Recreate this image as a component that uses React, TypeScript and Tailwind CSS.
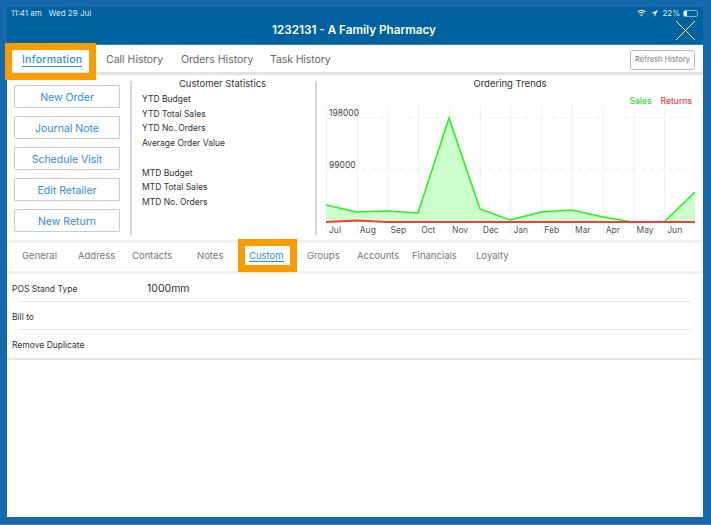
const actions = ['New Order', 'Journal Note', 'Schedule Visit', 'Edit Retailer', 'New Return']
const ytd = ['YTD Budget', 'YTD Total Sales', 'YTD No. Orders', 'Average Order Value']
const mtd = ['MTD Budget', 'MTD Total Sales', 'MTD No. Orders']
const months = ['Jul', 'Aug', 'Sep', 'Oct', 'Nov', 'Dec', 'Jan', 'Feb', 'Mar', 'Apr', 'May', 'Jun']
const detailTabs = [
  { label: 'General', w: 'w-[56px]' },
  { label: 'Address', w: 'w-[54px]' },
  { label: 'Contacts', w: 'w-[65px]' },
  { label: 'Notes', w: 'w-[52px]' },
  { label: 'Custom', w: 'w-[58px]', active: true },
  { label: 'Groups', w: 'w-[50px]' },
  { label: 'Accounts', w: 'w-[55px]' },
  { label: 'Financials', w: 'w-[64px]' },
  { label: 'Loyalty', w: 'w-[52px]' },
]
const fields = [
  { label: 'POS Stand Type', value: '1000mm' },
  { label: 'Bill to', value: '' },
  { label: 'Remove Duplicate', value: '' },
]

const sales = '0,100 30.7,107 61,106 92,108 123,13 154,104 184,115 215,107 246,105 277,112 307,117 338,117 369,87'

function Chart() {
  return (
    <svg width="369" height="130" viewBox="0 0 369 130" className="block">
      {months.map((m, i) => (
        <g key={m}>
          <line x1={i * 30.75 + 0.5} x2={i * 30.75 + 0.5} y1="0" y2="130" stroke="#f0f0f0" />
          <text x={i * 30.75 + 3} y="128" fontSize="8.5" fill="#555">{m}</text>
        </g>
      ))}
      <line x1="0" x2="369" y1="12.5" y2="12.5" stroke="#f0f0f0" strokeDasharray="5 4" />
      <line x1="0" x2="369" y1="64" y2="64" stroke="#f0f0f0" strokeDasharray="5 4" />
      <text x="3" y="11" fontSize="8.5" fill="#444">198000</text>
      <text x="3" y="63" fontSize="8.5" fill="#444">99000</text>
      <polygon points={`0,117 ${sales} 369,117`} fill="#ccffcc" />
      <polyline points={sales} fill="none" stroke="#22f522" strokeWidth="1.6" />
      <polyline points="0,117 31,115.5 61,117 369,117" fill="none" stroke="#f93a3a" strokeWidth="2" />
    </svg>
  )
}

function StatusIcons() {
  return (
    <div className="flex items-center gap-[3px] text-[8px] leading-[10px] text-[#dbe8f2]">
      <svg width="9" height="8" viewBox="0 0 24 20" fill="none" stroke="#fff" strokeWidth="3">
        <path d="M2 7c6-5 14-5 20 0M6 11c4-3 8-3 12 0" />
        <path d="M12 19l-3-4c2-1 4-1 6 0z" fill="#fff" stroke="none" />
      </svg>
      <svg width="7" height="7" viewBox="0 0 10 10" className="ml-[2px]">
        <path d="M10 0L0 4.5h4.8V10z" fill="#fff" />
      </svg>
      <span className="ml-[1px]">22%</span>
      <div className="w-[15px] h-[7px] rounded-[2px] border border-[#7fb0cf] overflow-hidden">
        <div className="w-[3px] h-full bg-white" />
      </div>
    </div>
  )
}

export default function App() {
  return (
    <div className="relative w-[711px] h-[525px] bg-[#1569ac] pt-[7px] pl-[7px] pr-[8px] pb-[7px] border-b border-[#777] font-['Inter',sans-serif] overflow-hidden">
      <div className="h-full flex flex-col bg-white">
        {/* Header */}
        <div className="relative h-[38px] shrink-0 bg-[#00629f] border-b border-[#2f86c0] flex justify-center pt-[15px] pr-[2px]">
          <span className="text-[11.7px] leading-[17px] font-semibold text-white">1232131 - A Family Pharmacy</span>
          <span className="absolute left-[4px] top-[1px] text-[8px] leading-[10px] text-[#dbe8f2]">11:41 am &nbsp; Wed 29 Jul</span>
          <div className="absolute right-[5px] top-[1px]"><StatusIcons /></div>
          <svg width="19" height="19" viewBox="0 0 19 19" className="absolute right-[8px] top-[14px]" stroke="#fff" strokeWidth="1">
            <path d="M0 0L19 19M19 0L0 19" />
          </svg>
        </div>

        {/* Top tabs */}
        <div className="h-[30px] shrink-0 flex items-center border-b-[3px] border-[#e3e3e6] text-[10.5px] text-[#666] pl-[15px] pr-[8px] pt-[3px]">
          <span className="w-[84px] text-[#2d8cf0] font-medium tracking-[0.25px]"><span className="border-b border-[#2d8cf0]">Information</span></span>
          <span className="w-[75px]">Call History</span>
          <span className="w-[89px]">Orders History</span>
          <span className="tracking-[-0.1px]">Task History</span>
          <button className="ml-auto w-[65px] h-[20px] rounded-[3px] border border-[#bbb] text-[7.5px] text-[#777]">Refresh History</button>
        </div>

        {/* Summary */}
        <div className="h-[165px] shrink-0 flex pt-[6px] pb-[5px]">
          <div className="w-[123px] shrink-0 flex flex-col gap-[8px] pl-[7px] pt-[4px]">
            {actions.map(a => (
              <button key={a} className="w-[106px] h-[23px] shrink-0 border border-[#ccc] rounded-[1px] text-[10.5px] text-[#2d8cf0] pt-[2px]">{a}</button>
            ))}
          </div>
          <div className="w-[187px] shrink-0 border-r-2 border-l-2 border-[#d8d8d8] text-[8.5px] text-[#333]">
            <p className="text-center text-[9.5px] text-[#333] leading-[13px] -mt-[4px] pr-[2px]">Customer Statistics</p>
            <div className="pl-[10px] mt-[2px]">
              {ytd.map(t => <p key={t} className="h-[14.7px] leading-[14.7px]">{t}</p>)}
              <div className="h-[15px]" />
              {mtd.map(t => <p key={t} className="h-[14.7px] leading-[14.7px]">{t}</p>)}
            </div>
          </div>
          <div className="flex-1 relative pl-[9px]">
            <p className="text-center text-[9.5px] text-[#333] leading-[13px] -mt-[4px] pr-[9px]">Ordering Trends</p>
            <div className="flex justify-end gap-[9px] pr-[11px] mt-[5px] h-[13px] text-[8.5px] leading-[13px] font-medium">
              <span className="text-[#22e522]">Sales</span>
              <span className="text-[#f93a3a]">Returns</span>
            </div>
            <div className="mt-[-3px]"><Chart /></div>
          </div>
        </div>

        {/* Detail tabs */}
        <div className="h-[34px] shrink-0 flex items-center border-y-[3px] border-[#f1f1f4] pl-[15px] pb-[2px] text-[9.5px] text-[#777]">
          {detailTabs.map(t => (
            <span key={t.label} className={`${t.w} shrink-0 ${t.active ? 'text-[#2d8cf0]' : ''}`}>
              {t.active ? <span className="border-b border-[#2d8cf0]">{t.label}</span> : t.label}
            </span>
          ))}
        </div>

        {/* Fields */}
        <div className="pl-[5px] pr-[13px]">
          {fields.map((f, i) => (
            <div key={f.label}>
              <div className="h-[27px] flex items-center pt-[3px] text-[8.5px] text-[#333]">
                <span className="w-[135px] shrink-0">{f.label}</span>
                <span className="text-[10.5px] text-[#333]">{f.value}</span>
              </div>
              {i < 2 ? <div className="h-px ml-[7px] bg-[#e4e4e4]" /> : <div className="h-px" />}
            </div>
          ))}
        </div>
        <div className="h-[2px] shrink-0 bg-[#e8e8ea]" />
      </div>

      {/* Orange callouts */}
      <div className="absolute left-[5px] top-[43px] w-[91px] h-[37px] border-[7px] border-[#f89c00]" />
      <div className="absolute left-[238px] top-[239px] w-[59px] h-[33px] border-[7px] border-[#f89c00]" />
    </div>
  )
}
